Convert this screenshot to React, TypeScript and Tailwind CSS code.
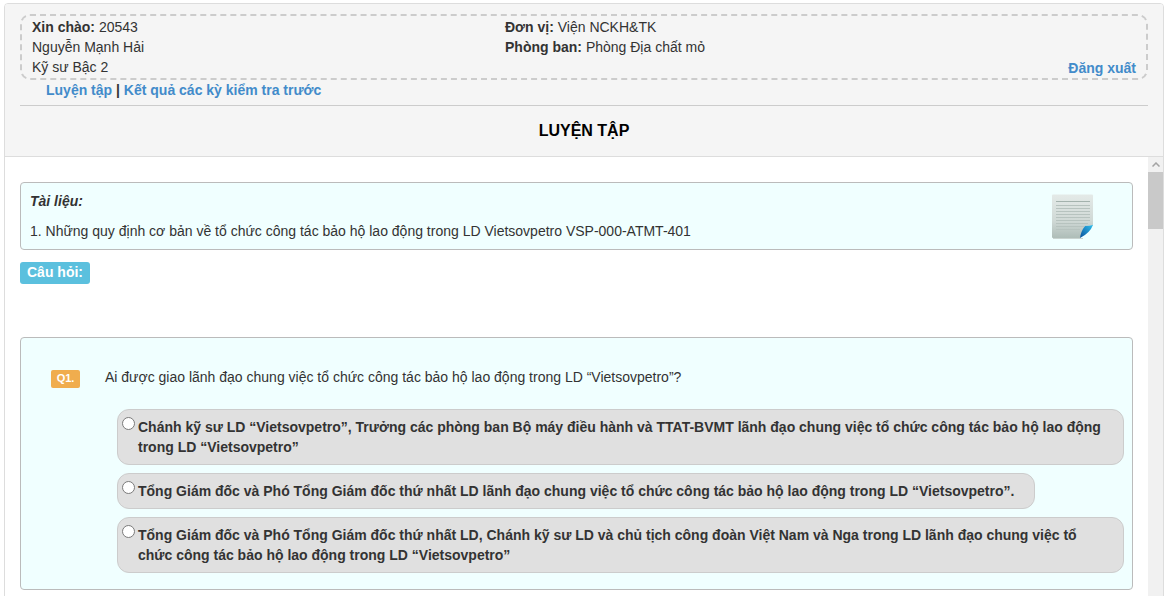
import React from "react";

const options = [
  {
    text: "Chánh kỹ sư LD “Vietsovpetro”, Trưởng các phòng ban Bộ máy điều hành và TTAT-BVMT lãnh đạo chung việc tổ chức công tác bảo hộ lao động trong LD “Vietsovpetro”",
    width: "w-[1007px]",
  },
  {
    text: "Tổng Giám đốc và Phó Tổng Giám đốc thứ nhất LD lãnh đạo chung việc tổ chức công tác bảo hộ lao động trong LD “Vietsovpetro”.",
    width: "w-[918px]",
  },
  {
    text: "Tổng Giám đốc và Phó Tổng Giám đốc thứ nhất LD, Chánh kỹ sư LD và chủ tịch công đoàn Việt Nam và Nga trong LD lãnh đạo chung việc tổ chức công tác bảo hộ lao động trong LD “Vietsovpetro”",
    width: "w-[1007px]",
  },
];

const DocIcon = () => (
  <svg width="44" height="46" viewBox="0 0 44 46" className="shrink-0">
    <defs>
      <linearGradient id="page" x1="0" y1="0" x2="0" y2="1">
        <stop offset="0" stopColor="#e4eae8" />
        <stop offset="0.6" stopColor="#d0d9d6" />
        <stop offset="1" stopColor="#aebdb8" />
      </linearGradient>
      <linearGradient id="fold" x1="1" y1="0" x2="0" y2="1">
        <stop offset="0" stopColor="#2fc0ee" />
        <stop offset="1" stopColor="#0a4f9a" />
      </linearGradient>
    </defs>
    <path d="M2 44h30v1H2z" fill="#c9d3d0" />
    <path d="M1 1.500Q1 0.500 2 0.500h39q1 0 1 1V31l-13 13H2q-1 0-1-1z" fill="url(#page)" />
    <g stroke="#b7c3bf" strokeWidth="1">
      <path d="M5 7.500h34" stroke="#a3b2ad" />
      <path d="M5 11.500h34M5 14.500h34M5 17.500h34M5 20.500h34M5 23.500h34M5 26.500h34M5 29.500h32M5 32.500h28M5 35.500h24" />
    </g>
    <path d="M29 44q2-8 13-13q-3 1-8 1q-2 5-5 12z" fill="#eef4f2" />
    <path d="M29 44q1-7 5-12q4 0 8-1q-3 8-13 13z" fill="url(#fold)" />
  </svg>
);

const FakeScrollbar = () => (
  <div className="w-[15px] shrink-0 bg-[#f1f1f1] flex flex-col">
    <div className="h-[15px] flex items-center justify-center">
      <svg width="8" height="5" viewBox="0 0 8 5">
        <path d="M0.500 4.500 4 1l3.500 3.500" fill="none" stroke="#a3a3a3" strokeWidth="1.500" />
      </svg>
    </div>
    <div className="h-[57px] bg-[#c9c9c9]" />
  </div>
);

export default function App() {
  return (
    <div className="h-[596px] overflow-hidden bg-white pt-[3px] px-[4px] font-['Liberation_Sans',Arial,sans-serif] text-[14px] leading-[20px] text-[#333]">
      <div className="h-[700px] border border-[#ddd] rounded-[4px]">
        <div className="h-[153px] bg-[#f5f5f5] border-b border-[#ddd] px-[15px] pt-[10px] rounded-t-[3px]">
          <div className="h-[66px] border-2 border-dashed border-[#ccc] rounded-[10px] px-[10px] pt-[1px] flex">
            <div className="w-[473px]">
              <div><b>Xin chào:</b> 20543</div>
              <div>Nguyễn Mạnh Hải</div>
              <div>Kỹ sư Bậc 2</div>
            </div>
            <div className="flex-1">
              <div><b>Đơn vị:</b> Viện NCKH&amp;TK</div>
              <div><b>Phòng ban:</b> Phòng Địa chất mỏ</div>
            </div>
            <a className="self-end font-bold text-[#428bca]">Đăng xuất</a>
          </div>
          <div className="pl-[26px] font-bold h-[25px]">
            <a className="text-[#428bca]">Luyện tập</a> | <a className="text-[#428bca]">Kết quả các kỳ kiểm tra trước</a>
          </div>
          <div className="border-t border-[#ccc]" />
          <h3 className="mt-[16px] text-center text-[16px] leading-[18px] font-bold text-black">LUYỆN TẬP</h3>
        </div>
        <div className="flex h-[546px]">
          <div className="flex-1 px-[15px] pt-[25px]">
            <div className="h-[68px] border border-[#bbb] rounded-[4px] bg-[#f0ffff] pl-[9px] pr-[37px] flex justify-between items-start">
              <div className="pt-[8px]">
                <div className="font-bold italic">Tài liệu:</div>
                <div className="mt-[10px]">1. Những quy định cơ bản về tổ chức công tác bảo hộ lao động trong LD Vietsovpetro VSP-000-ATMT-401</div>
              </div>
              <div className="pt-[11px]">
                <DocIcon />
              </div>
            </div>
            <div className="mt-[12px] w-[70px] h-[22px] rounded-[3px] bg-[#5bc0de] text-white font-bold text-center leading-[21px]">Câu hỏi:</div>
            <div className="mt-[53px] h-[253px] border border-[#bbb] rounded-[4px] bg-[#f0ffff] pt-[29px] pl-[30px]">
              <div className="flex items-start">
                <span className="mt-[3px] w-[29px] h-[18px] rounded-[2px] bg-[#f0ad4e] text-white font-bold text-[11px] leading-[17px] text-center">Q1.</span>
                <span className="ml-[25px]">Ai được giao lãnh đạo chung việc tổ chức công tác bảo hộ lao động trong LD “Vietsovpetro”?</span>
              </div>
              <div className="mt-[21px] ml-[66px] flex flex-col gap-[8px] items-start">
                {options.map((o) => (
                  <div key={o.text} className={`${o.width} flex border border-[#ccc] rounded-[12px] bg-[#e0e0e0] pl-[4px] pr-[16px] py-[7px]`}>
                    <input type="radio" name="q1" className="appearance-none m-0 w-[13px] h-[13px] shrink-0 rounded-full border-[1.5px] border-[#7a7a7a] bg-white" />
                    <span className="ml-[3px] font-bold">{o.text}</span>
                  </div>
                ))}
              </div>
            </div>
          </div>
          <FakeScrollbar />
        </div>
      </div>
    </div>
  );
}
